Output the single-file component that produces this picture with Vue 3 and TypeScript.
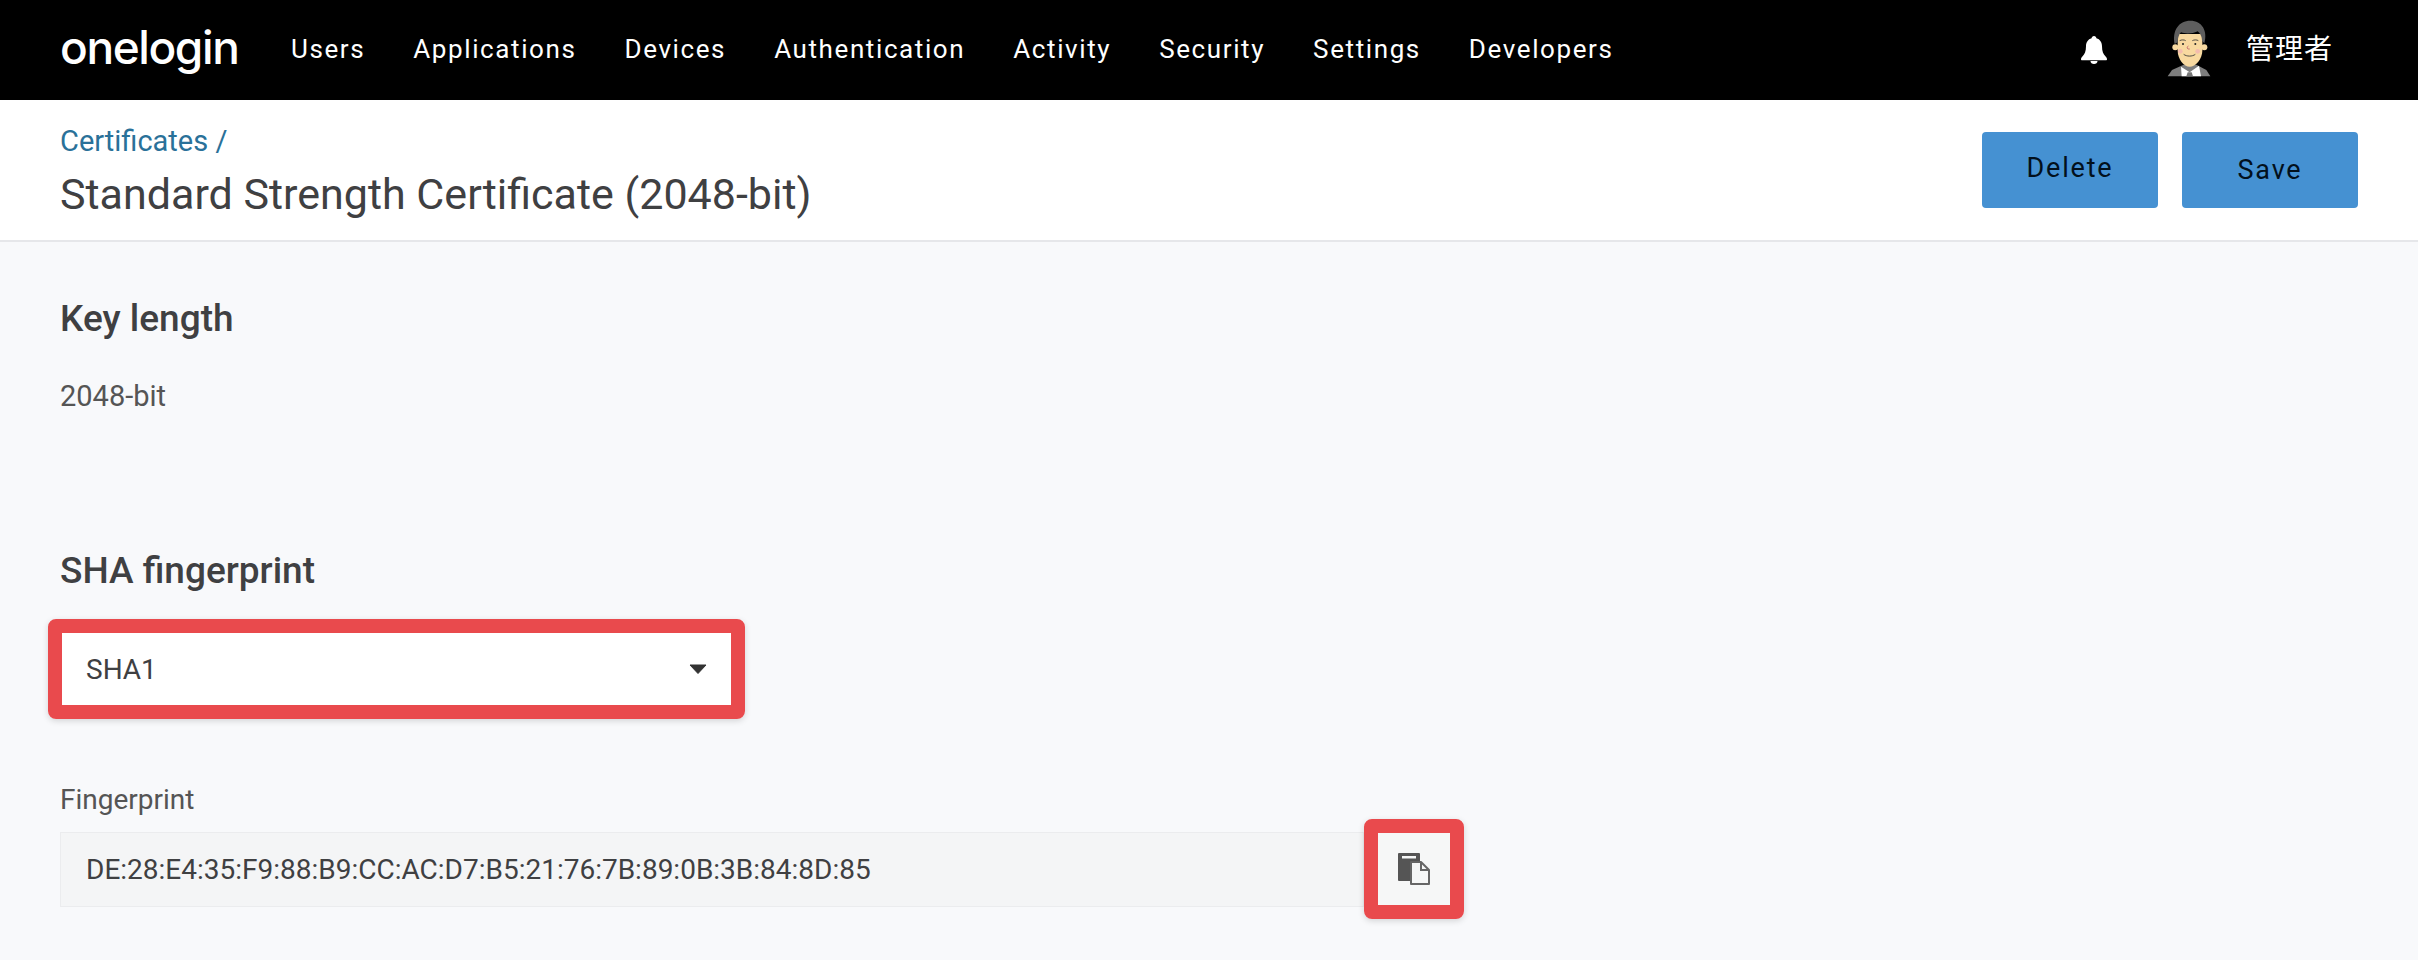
<script setup lang="ts">
const navItems: string[] = ['Users', 'Applications', 'Devices', 'Authentication', 'Activity', 'Security', 'Settings', 'Developers']
</script>

<template>
  <div class="page">
    <nav class="topbar">
      <div class="logo">onelogin</div>
      <ul class="nav">
        <li v-for="item in navItems" :key="item">{{ item }}</li>
      </ul>
      <div class="user">
        <svg class="bell" viewBox="0 0 26 28" width="26" height="28">
          <path fill="#fff" d="M13 0c1.400 0 2.400 1 2.400 2.300 3.600 1 5.600 4 5.600 8 0 5 1.400 8 3.400 10 1 1 1.600 2 1.600 3 0 .6-.4 1-1 1H1c-.6 0-1-.4-1-1 0-1 .6-2 1.600-3 2-2 3.400-5 3.400-10 0-4 2-7 5.600-8C10.600 1 11.600 0 13 0z"/>
          <path fill="#fff" d="M9.500 25h7c0 1.800-1.500 3-3.500 3s-3.500-1.200-3.500-3z"/>
        </svg>
        <svg class="avatar" viewBox="80 28 132 171" width="44" height="57">
          <path fill="#7d7d7d" d="M82 197l13-19 35-16h38l30 16 12 19z"/>
          <path fill="#fff" d="M122 168l26 17 28-20 6 32h-58z"/>
          <path fill="#777" d="M142 185h12l4 12h-20z"/>
          <circle cx="105" cy="110" r="9" fill="#f8d9a0"/>
          <circle cx="192" cy="110" r="9" fill="#f8d9a0"/>
          <path fill="#f8d9a0" d="M112 70h74v50c0 25-21 48-38 48s-36-23-36-48z"/>
          <path fill="#5e5e5e" d="M103 100C95 60 115 30 150 30s53 30 42 68l-7-8c0-15-7-22-13-28-17 8-37 8-50 3-7 7-10 20-10 30z"/>
          <circle cx="120" cy="122" r="7" fill="#f4bcae"/>
          <circle cx="172" cy="122" r="7" fill="#f4bcae"/>
          <circle cx="128" cy="100" r="3" fill="#222"/>
          <circle cx="165" cy="100" r="3" fill="#222"/>
          <path fill="none" stroke="#333" stroke-width="2.500" d="M118 90c5-3 14-3 18 0M156 90c5-3 14-3 18 0M130 131c9 7 26 7 35 0"/>
          <path fill="none" stroke="#a35" stroke-width="2" d="M144 106c-5 3-5 10 4 9"/>
        </svg>
        <span class="username">管理者</span>
      </div>
    </nav>

    <header class="subhead">
      <div class="titles">
        <div class="crumb"><a class="crumb-link">Certificates</a> <span>/</span></div>
        <h1>Standard Strength Certificate (2048-bit)</h1>
      </div>
      <div class="actions">
        <button class="btn delete">Delete</button>
        <button class="btn">Save</button>
      </div>
    </header>

    <main class="content">
      <h2 class="first">Key length</h2>
      <p class="value">2048-bit</p>

      <h2 class="second">SHA fingerprint</h2>
      <div class="marked select-mark">
        <div class="select">
          <span>SHA1</span>
          <svg viewBox="0 0 18 10" width="18" height="10"><path fill="#333" stroke="#333" stroke-linejoin="round" d="M1 1h16L9 9.500z"/></svg>
        </div>
      </div>

      <div class="label">Fingerprint</div>
      <div class="fingerprint-row">
        <div class="fingerprint">DE:28:E4:35:F9:88:B9:CC:AC:D7:B5:21:76:7B:89:0B:3B:84:8D:85</div>
        <div class="marked copy-mark">
          <div class="copy">
            <svg viewBox="0 0 32 32" width="32" height="32">
              <path fill="#555" d="M1 0h20a1 1 0 0 1 1 1v9h-2l-8 0v18H1a1 1 0 0 1-1-1V1a1 1 0 0 1 1-1z"/>
              <rect x="4" y="3" width="14" height="2.500" fill="#f6f7f7"/>
              <path fill="#f6f7f7" stroke="#666" stroke-width="2" stroke-linejoin="round" d="M13 9h10l8 8v14H13z"/>
              <path fill="none" stroke="#666" stroke-width="2" d="M23 9v8h8"/>
            </svg>
          </div>
        </div>
      </div>
    </main>
  </div>
</template>

<style>
html, body { margin: 0; height: 960px; overflow: hidden; background: #f8f9fb; }
</style>

<style scoped>
.page { font-family: Roboto, "Noto Sans CJK JP", sans-serif; color: #3f4042; height: 960px; overflow: hidden; background: #f8f9fb; }
.topbar { height: 100px; background: #000; display: flex; align-items: center; padding: 0 60px; box-sizing: border-box; color: #fff; }
.logo { font-family: Inter, sans-serif; font-size: 46px; width: 231px; line-height: 1; margin-top: -6px; font-weight: 450; letter-spacing: -1.4px; }
.nav { display: flex; gap: 48px; list-style: none; margin: -3px 0 0; padding: 0; font-size: 26px; letter-spacing: 1.6px; flex: 1; }
.user { display: flex; align-items: center; padding-right: 25px; }
.bell { margin-right: 60px; }
.avatar { margin-right: 35px; margin-top: -4px; }
.username { font-family: "Noto Sans CJK JP", sans-serif; font-size: 28px; letter-spacing: 1px; margin-top: -7px; }
.subhead { height: 140px; background: #fff; border-bottom: 2px solid #e6e7ea; display: flex; justify-content: space-between; padding: 0 60px; }
.crumb { font-size: 29px; color: #2a7199; margin-top: 25px; line-height: 32px; }
h1 { font-size: 43px; font-weight: 400; margin: 12px 0 0; line-height: 50px; color: #3f4042; }
.actions { display: flex; gap: 24px; padding-top: 32px; }
.btn { width: 176px; height: 76px; border: 0; border-radius: 4px; background: #4591d2; color: #02101c; font: 400 27px Roboto, sans-serif; letter-spacing: 1.8px; }
.delete { padding-bottom: 6px; }
.content { padding: 0 60px; }
h2 { font-size: 37px; font-weight: 500; margin: 0; line-height: 42px; color: #3f4042; }
.first { padding-top: 56px; }
.value { font-size: 29px; margin: 40px 0 0; line-height: 32px; color: #555; }
.second { margin-top: 138px; }
.marked { border: 14px solid #e94a4d; border-radius: 8px; box-sizing: border-box; box-shadow: 0 2px 6px rgba(0,0,0,.15); }
.select-mark { width: 697px; margin: 27px 0 0 -12px; }
.select { height: 72px; background: #fff; display: flex; align-items: center; justify-content: space-between; padding: 0 24px; font-size: 28px; }
.label { font-size: 28px; margin-top: 65px; line-height: 32px; color: #555; }
.fingerprint-row { display: flex; align-items: center; margin-top: 3px; }
.fingerprint { width: 1304px; height: 75px; box-sizing: border-box; background: #f4f5f6; border: 1px solid #ebecee; font-size: 28px; line-height: 73px; padding-left: 25px; }
.copy-mark { width: 100px; height: 100px; }
.copy { width: 72px; height: 72px; background: #f6f7f7; display: flex; align-items: center; justify-content: center; }
</style>
